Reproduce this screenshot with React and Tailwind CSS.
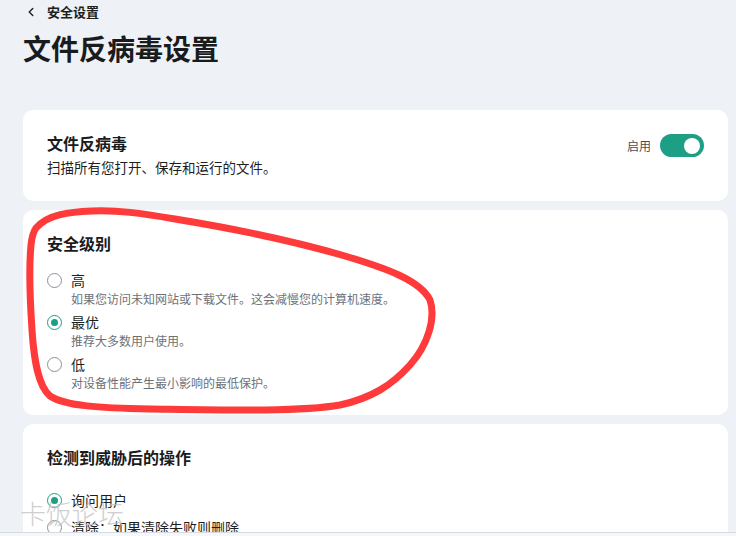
import React from "react";

const font = { fontFamily: '"Noto Sans CJK SC", "Noto Sans", sans-serif' };

function Radio({ checked }) {
  return checked ? (
    <div className="w-[15px] h-[15px] rounded-full border-[1.5px] border-[#1d9f86] flex items-center justify-center shrink-0">
      <div className="w-[7px] h-[7px] rounded-full bg-[#1d9f86]" />
    </div>
  ) : (
    <div className="w-[15px] h-[15px] rounded-full border-[1.5px] border-[#8b9099] shrink-0" />
  );
}

function Option({ checked, label, desc }) {
  return (
    <div className="flex flex-col">
      <div className="flex items-center h-[20px]">
        <div className="w-[24px] flex items-center">
          <Radio checked={checked} />
        </div>
        <span className="text-[14px] leading-[20px] text-[#1d1e20]">{label}</span>
      </div>
      {desc && (
        <div className="pl-[24px] text-[12px] leading-[18px] text-[#6d7178]">{desc}</div>
      )}
    </div>
  );
}

export default function App() {
  return (
    <div
      className="relative w-[736px] h-[536px] overflow-hidden bg-[#eef1f5] flex flex-col"
      style={font}
    >
      <div className="flex-1 overflow-hidden pl-[23px] pr-[8px]">
        <div className="h-[24px] flex items-center text-[#1d1e20]">
          <svg width="14" height="14" viewBox="0 0 24 24" className="ml-[1px]" fill="none" stroke="#1d1e20" strokeWidth="2.4" strokeLinecap="round" strokeLinejoin="round">
            <path d="M15 6l-6 6 6 6" />
          </svg>
          <span className="ml-[9px] text-[13px] font-bold">安全设置</span>
        </div>
        <h1 className="mt-[6px] text-[28px] leading-[36px] font-bold text-[#1a1b1d]">文件反病毒设置</h1>

        <div className="mt-[44px] flex flex-col gap-[9px]">
          <div className="bg-white rounded-[10px] px-[24px] pt-[21px] pb-[24px] flex items-start justify-between">
            <div className="flex flex-col">
              <div className="text-[16px] leading-[24px] font-bold text-[#1a1b1d]">文件反病毒</div>
              <div className="mt-[2px] text-[13.5px] leading-[20px] text-[#1d1e20]">扫描所有您打开、保存和运行的文件。</div>
            </div>
            <div className="flex items-center gap-[9px] mt-[3px]">
              <span className="text-[12px] text-[#4a4e55]">启用</span>
              <div className="w-[44px] h-[23px] rounded-full bg-[#1d9f86] flex items-center justify-end pr-[4px]">
                <div className="w-[16px] h-[16px] rounded-full bg-white" />
              </div>
            </div>
          </div>

          <div className="bg-white rounded-[10px] px-[24px] pt-[21px] pb-[23px] flex flex-col">
            <div className="text-[16px] leading-[24px] font-bold text-[#1a1b1d]">安全级别</div>
            <div className="mt-[15px] flex flex-col gap-[4px]">
              <Option label="高" desc="如果您访问未知网站或下载文件。这会减慢您的计算机速度。" />
              <Option checked label="最优" desc="推荐大多数用户使用。" />
              <Option label="低" desc="对设备性能产生最小影响的最低保护。" />
            </div>
          </div>

          <div className="bg-white rounded-[10px] px-[24px] pt-[21px] pb-[23px] flex flex-col">
            <div className="text-[16px] leading-[24px] font-bold text-[#1a1b1d]">检测到威胁后的操作</div>
            <div className="mt-[21px] flex flex-col gap-[7px]">
              <Option checked label="询问用户" />
              <Option label="清除：如果清除失败则删除" />
            </div>
          </div>
        </div>
      </div>
      <div className="h-[4px] shrink-0 border-t border-[#d6dbe1] bg-[#f5f7f9]" />

      <svg className="absolute inset-0 pointer-events-none" width="736" height="536" viewBox="0 0 736 536">
        <path
          d="M36 228 C48 214 70 212 92 211 C118 210 140 213 175 219 C230 228 290 240 345 256 C385 268 420 280 430 300 C436 318 428 345 410 365 C392 385 372 398 340 405 C300 412 220 410 150 409 C100 408 65 406 50 396 C38 386 34 360 32 330 C30 300 29 265 31 245 C32 236 33 232 36 228"
          fill="none"
          stroke="#ff3a3a"
          strokeWidth="7"
          strokeLinecap="round"
          strokeLinejoin="round"
        />
      </svg>
      <div className="absolute left-[20px] top-[496px] text-[26px] leading-[34px] font-light text-[#c4c4c4] opacity-80 pointer-events-none">
        卡饭论坛
      </div>
    </div>
  );
}
